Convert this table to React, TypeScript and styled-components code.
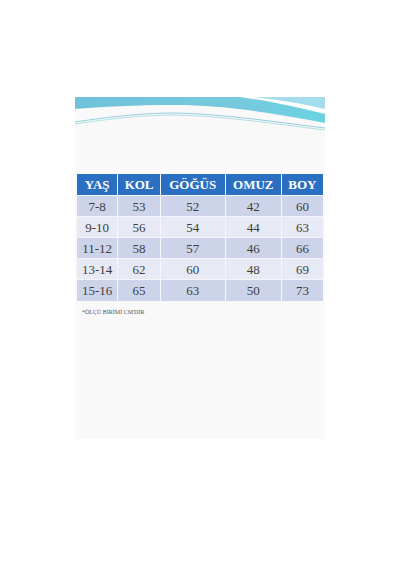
import styled, {createGlobalStyle} from 'styled-components'

const GlobalStyle = createGlobalStyle`
  html, body {
    margin: 0;
    padding: 0;
    background: #ffffff;
  }
`

const Page = styled.div`
  width: 400px;
  height: 570px;
  padding: 97px 0 0 75px;
  box-sizing: border-box;
`

const Card = styled.div`
  width: 250px;
  height: 342px;
  background: #f9f9f9;
  display: flex;
  flex-direction: column;
`

const Wave = styled.svg`
  display: block;
  width: 250px;
  height: 40px;
`

const Table = styled.table`
  margin: 37px 2px 0 2px;
  width: 246px;
  max-width: 246px;
  border-collapse: collapse;
  font-family: "Liberation Serif", "DejaVu Serif", serif;
  table-layout: fixed;
`

const Head = styled.th<{$w: number}>`
  width: ${(props) => props.$w}%;
  height: 21px;
  padding: 0;
  background: #2b6fc3;
  color: #ffffff;
  font-size: 13px;
  font-weight: bold;
  text-align: center;
  border-right: 1px solid #f4f6fb;
  &:last-child {
    border-right: none;
  }
`

const Row = styled.tr<{$dark: boolean}>`
  background: ${(props) => (props.$dark ? '#cdd4ea' : '#e7eaf5')};
`

const Cell = styled.td`
  height: 21px;
  padding: 2px 0 0;
  box-sizing: border-box;
  color: #3d3d3d;
  font-size: 13px;
  text-align: center;
  border-top: 1px solid #f4f6fb;
  border-right: 1px solid #f4f6fb;
  &:last-child {
    border-right: none;
  }
`

const Note = styled.div`
  margin: 8px 0 0 7px;
  font-family: "Liberation Serif", "DejaVu Serif", serif;
  font-size: 6px;
  color: #555;
`

const heads = [
  {label: 'YAŞ', w: 16.7},
  {label: 'KOL', w: 17.1},
  {label: 'GÖĞÜS', w: 26.4},
  {label: 'OMUZ', w: 22.8},
  {label: 'BOY', w: 17},
]

const rows = [
  ['7-8', '53', '52', '42', '60'],
  ['9-10', '56', '54', '44', '63'],
  ['11-12', '58', '57', '46', '66'],
  ['13-14', '62', '60', '48', '69'],
  ['15-16', '65', '63', '50', '73'],
]

const App = () => {
  return (
    <Page>
      <GlobalStyle />
      <Card>
        <Wave viewBox="0 0 250 40">
          <defs>
            <linearGradient id="blue" x1="0" y1="0" x2="1" y2="0">
              <stop offset="0" stopColor="#6fc2d9" />
              <stop offset="0.6" stopColor="#78c8dd" />
              <stop offset="1" stopColor="#6ad2e2" />
            </linearGradient>
          </defs>
          <path d="M0,0 H250 V26 C205,17 150,8 100,8 C60,8 25,10 0,12 Z" fill="url(#blue)" />
          <path d="M180,0 H250 V12 C230,7 205,3 180,0 Z" fill="#a4dcee" />
          <path d="M165,0 L180,0 C205,3 230,7 250,12 L250,17 C225,11 195,4 165,0 Z" fill="#ffffff" />
          <path d="M0,25 C40,19 70,16 100,16 C150,17 200,25 250,31" fill="none" stroke="#8cc6dc" strokeWidth="0.9" />
          <path d="M0,27 C40,21 70,18 100,18 C150,19 200,27 250,33" fill="none" stroke="#9fd8de" strokeWidth="0.8" />
        </Wave>
        <Table>
          <thead>
            <tr>
              {heads.map((h) => (
                <Head key={h.label} $w={h.w}>{h.label}</Head>
              ))}
            </tr>
          </thead>
          <tbody>
            {rows.map((r, i) => (
              <Row key={r[0]} $dark={i % 2 === 0}>
                {r.map((c, j) => (
                  <Cell key={j}>{c}</Cell>
                ))}
              </Row>
            ))}
          </tbody>
        </Table>
        <Note>*ÖLÇÜ BİRİMİ CM'DİR</Note>
      </Card>
    </Page>
  )
}

export default App
